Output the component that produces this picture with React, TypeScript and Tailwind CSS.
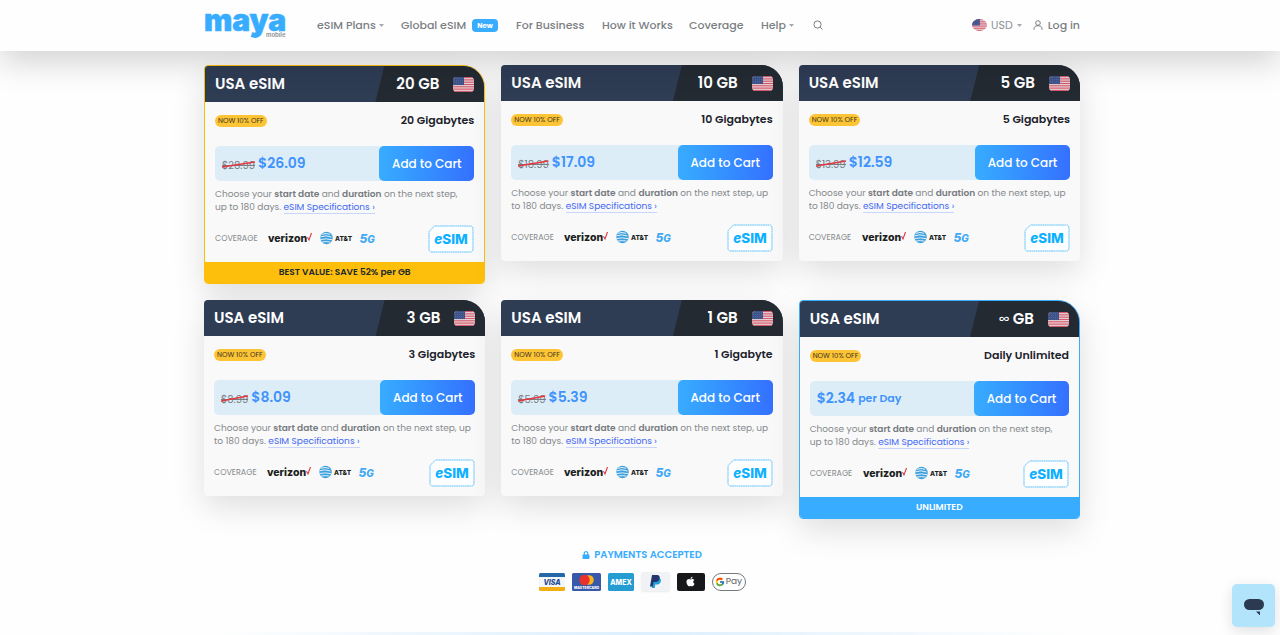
import { useId } from "react";
import type { ReactNode } from "react";
import { FaApple, FaLock } from "react-icons/fa";
import { FcGoogle } from "react-icons/fc";

type Tone = "plain" | "gold" | "blue";

type Plan = {
  amount: string;
  label: string;
  was?: string;
  price: string;
  per?: string;
  tone: Tone;
  ribbon?: string;
};

const plans: Plan[] = [
  { amount: "20", label: "20 Gigabytes", was: "$28.99", price: "$26.09", tone: "gold", ribbon: "BEST VALUE: SAVE 52% per GB" },
  { amount: "10", label: "10 Gigabytes", was: "$18.99", price: "$17.09", tone: "plain" },
  { amount: "5", label: "5 Gigabytes", was: "$13.99", price: "$12.59", tone: "plain" },
  { amount: "3", label: "3 Gigabytes", was: "$8.99", price: "$8.09", tone: "plain" },
  { amount: "1", label: "1 Gigabyte", was: "$5.99", price: "$5.39", tone: "plain" },
  { amount: "∞", label: "Daily Unlimited", price: "$2.34", per: "per Day", tone: "blue", ribbon: "UNLIMITED" },
];

const frame: Record<Tone, string> = {
  plain: "",
  gold: "border border-[#fdbf0c]",
  blue: "border border-[#38acff]",
};

const ribbonTone: Record<Tone, string> = {
  plain: "",
  gold: "bg-[#fdbf0c] text-[#212830]",
  blue: "bg-[#38acff] text-white",
};

function Flag({ className, round = false }: { className: string; round?: boolean }) {
  const id = useId();
  return (
    <svg className={className} viewBox="0 0 21 16" preserveAspectRatio="none" aria-hidden="true">
      <clipPath id={id}>
        {round ? <ellipse cx="10.5" cy="8" rx="10.5" ry="8" /> : <rect width="21" height="16" rx="4" />}
      </clipPath>
      <g clipPath={`url(#${id})`}>
        <rect width="21" height="16" fill="#ead9df" />
        {[0, 1, 2, 3, 4, 5, 6].map((i) => (
          <rect key={i} y={i * 2.46} width="21" height="1.23" fill="#d4596a" />
        ))}
        <rect width="11" height="8.6" fill="#3d5288" />
        {[1.5, 3.5, 5.5, 7.5].map((y) =>
          [1.5, 3.5, 5.5, 7.5, 9.5].map((x) => <circle key={`${x}-${y}`} cx={x} cy={y} r="0.35" fill="#8494bd" />),
        )}
      </g>
    </svg>
  );
}

function Caret() {
  return (
    <svg className="h-[3px] w-[5px]" viewBox="0 0 5 3" aria-hidden="true">
      <path d="M0 0h5L2.500 3z" fill="#a5a9ae" />
    </svg>
  );
}

function Logo() {
  return (
    <svg className="h-[44px] w-[84px]" viewBox="0 0 84 44" role="img" aria-label="maya mobile">
      <text x="0" y="28" fontFamily="Inter, sans-serif" fontSize="30" fontWeight="900" fill="#38acff" stroke="#38acff" strokeWidth="0.600" strokeLinejoin="round">maya</text>
      <text x="62" y="34" fontFamily="Inter, sans-serif" fontSize="6" fontWeight="600" fill="#8a8f95">mobile</text>
    </svg>
  );
}

function NavLink({ children, className }: { children: ReactNode; className: string }) {
  return (
    <a href="#" className={`flex items-center gap-[3px] whitespace-nowrap ${className}`}>
      {children}
    </a>
  );
}

function Header() {
  return (
    <header className="relative z-10 bg-[#fefefe] pb-px pl-[4px] shadow-[0_11px_33px_rgba(0,0,0,0.175)]">
      <div className="mx-auto flex h-[50px] max-w-[876px] items-center text-[11px] font-medium text-[#7b7f84]">
        <a href="#" className="mr-[29px] shrink-0">
          <Logo />
        </a>
        <nav className="flex flex-1 items-center">
          <NavLink className="w-[84px]">eSIM Plans<Caret /></NavLink>
          <NavLink className="w-[115px] gap-[6px]">
            Global eSIM
            <span className="rounded-[4px] bg-[#38acff] px-[5px] text-[7px] leading-[13px] font-bold text-white">New</span>
          </NavLink>
          <NavLink className="w-[86px]">For Business</NavLink>
          <NavLink className="w-[87px]">How it Works</NavLink>
          <NavLink className="w-[72px]">Coverage</NavLink>
          <NavLink className="w-[52px]">Help<Caret /></NavLink>
          <button type="button" aria-label="Search">
            <svg className="size-[10px]" viewBox="0 0 10 10" fill="none" stroke="#7b7f84" aria-hidden="true">
              <circle cx="4.500" cy="4.500" r="3.600" />
              <path d="M7.200 7.200 9.500 9.500" />
            </svg>
          </button>
        </nav>
        <button type="button" className="mr-[11px] flex items-center gap-[4px] font-normal text-[#909398]">
          <Flag className="h-[12px] w-[15px]" round />
          USD
          <Caret />
        </button>
        <a href="#" className="flex items-center gap-[5px]">
          <svg className="size-[10px]" viewBox="0 0 10 10" fill="none" stroke="#7b7f84" aria-hidden="true">
            <circle cx="5" cy="3" r="2.300" />
            <path d="M1 9.700V9c0-2 1.400-3.200 3-3.200h2c1.600 0 3 1.200 3 3.200v.7" />
          </svg>
          Log in
        </a>
      </div>
    </header>
  );
}

function Carriers() {
  return (
    <svg className="h-[16px] w-[110px]" viewBox="0 0 110 16" role="img" aria-label="Verizon, AT&T, 5G">
      <text x="0" y="11" fontFamily="Inter, sans-serif" fontSize="10.500" fontWeight="800" fill="#1c1e21">verizon</text>
      <path d="M39.500 6.200 41 9 43.500 2" fill="none" stroke="#e0383e" strokeWidth="1.100" />
      <circle cx="58.500" cy="7" r="6.200" fill="#3da0dc" />
      <path d="M54 3.300q4-1.600 8 0M52.500 5.800q5.500-2 11 .2M52.500 8.500q6-1.300 11.500.2M54 11q4.500-.8 8.500.1" fill="none" stroke="#e4f2fb" />
      <text x="67" y="9.500" fontFamily="Inter, sans-serif" fontSize="6.500" fontWeight="800" fill="#1c1e21">AT&amp;T</text>
      <text x="91.500" y="12" fontFamily="Inter, sans-serif" fontSize="12" fontWeight="800" fontStyle="italic" fill="#3fa9f5">5<tspan fontSize="10">G</tspan></text>
    </svg>
  );
}

function EsimMark() {
  return (
    <svg className="h-[28px] w-[46px]" viewBox="0 0 46 28" role="img" aria-label="eSIM">
      <path d="M7.500 1H42q3 0 3 3v20q0 3-3 3H4q-3 0-3-3V7.500q0-1 .8-1.800L6 1.600q.6-.6 1.500-.6Z" fill="#fcfeff" stroke="#62c3fb" strokeDasharray="1.800 .4" />
      <text x="23" y="19" textAnchor="middle" fontFamily="Inter, sans-serif" fontSize="13.500" fontWeight="800" fill="#0fb0ff"><tspan fontStyle="italic">e</tspan>SIM</text>
    </svg>
  );
}

function PlanCard({ plan }: { plan: Plan }) {
  return (
    <article className={`overflow-hidden rounded-[4px] rounded-tr-[22px] bg-[#f9f9f9] shadow-[0_11px_33px_rgba(0,0,0,0.13)] ${frame[plan.tone]}`}>
      <div className="flex h-[36px] bg-[#2e3c54] text-white">
        <h2 className="flex flex-1 items-center pt-px pl-[10px] text-[15px] font-semibold">USA eSIM</h2>
        <div className="flex w-[39%] items-center justify-end gap-[14px] bg-[#232a32] pt-px pr-[10px] text-[15px] font-semibold [clip-path:polygon(9px_0,100%_0,100%_100%,0_100%)]">
          <p>
            <span className={plan.amount === "∞" ? "font-normal" : ""}>{plan.amount}</span> GB
          </p>
          <Flag className="h-[15px] w-[21px]" />
        </div>
      </div>
      <div className="px-[10px] pt-[9px] pb-[9px]">
        <div className="flex h-[18px] items-center justify-between">
          <span className="mt-[2px] rounded-full bg-[#fdc436] px-[3px] text-[7px] leading-[12px] text-[#3c3420]">NOW 10% OFF</span>
          <span className="text-[11px] font-semibold text-[#1c222b]">{plan.label}</span>
        </div>
        <div className="mt-[17px] flex h-[35px] rounded-[5px] bg-[#dcedf8]">
          <p className="flex flex-1 items-center gap-[3px] pl-[7px] font-semibold text-[#3f93fb]">
            {plan.was && (
              <s className="relative mt-[3px] text-[10px] font-normal text-[#777d83] no-underline">
                {plan.was}
                <span className="absolute inset-x-0 top-[7px] h-px bg-[#777d83]" />
                <svg className="absolute inset-x-0 top-[3px] h-[7px] w-full" viewBox="0 0 34 7" preserveAspectRatio="none" aria-hidden="true">
                  <path d="M0 6 34 1" stroke="#e5373e" strokeWidth="1.600" />
                </svg>
              </s>
            )}
            <span className="text-[14px]">{plan.price}</span>
            {plan.per && <span className="text-[11px]">{plan.per}</span>}
          </p>
          <button type="button" className="w-[95px] rounded-[5px] bg-linear-to-r from-[#38acff] to-[#3570ff] text-[12px] font-medium text-white">
            Add to Cart
          </button>
        </div>
        <p className="mt-[7px] pr-[3px] text-[9px] leading-[13px] text-[#85898d]">
          Choose your <b className="font-semibold text-[#777b80]">start date</b> and{" "}
          <b className="font-semibold text-[#777b80]">duration</b> on the next step, up to 180 days.{" "}
          <a href="#" className="border-b border-[#c9d6fb] text-[#4068f5]">eSIM Specifications ›</a>
        </p>
        <div className="mt-[11px] flex items-center">
          <span className="w-[53px] text-[8px] leading-[12px] text-[#85898d]">COVERAGE</span>
          <Carriers />
          <span className="ml-auto"><EsimMark /></span>
        </div>
      </div>
      {plan.ribbon && (
        <p className={`text-center text-[9px] leading-[21px] font-semibold ${ribbonTone[plan.tone]}`}>{plan.ribbon}</p>
      )}
    </article>
  );
}

function Payments() {
  return (
    <section className="mt-[29px] flex flex-col items-center">
      <h3 className="flex items-center gap-[4px] text-[10px] leading-[14px] font-semibold text-[#38acff]">
        <FaLock className="size-[8px]" />
        PAYMENTS ACCEPTED
      </h3>
      <div className="mt-[10px] flex items-center gap-[7px]">
        <svg className="h-[18px] w-[26px]" viewBox="0 0 26 18" role="img" aria-label="Visa">
          <rect width="26" height="18" rx="1.500" fill="#f4f5f7" />
          <path d="M0 4V1.500Q0 0 1.500 0h23Q26 0 26 1.500V4z" fill="#2468a8" />
          <path d="M0 14v2.500Q0 18 1.500 18h23q1.500 0 1.500-1.500V14z" fill="#f2ae14" />
          <text x="13" y="11.700" textAnchor="middle" fontFamily="Inter, sans-serif" fontSize="7" fontWeight="800" fontStyle="italic" fill="#1c4b93">VISA</text>
        </svg>
        <svg className="h-[18px] w-[29px]" viewBox="0 0 29 18" role="img" aria-label="Mastercard">
          <rect width="29" height="18" rx="1.500" fill="#3858aa" />
          <circle cx="17" cy="7" r="4.800" fill="#f8b51e" />
          <circle cx="12.500" cy="7" r="5.200" fill="#e9302d" />
          <text x="14.500" y="16.300" textAnchor="middle" fontFamily="Inter, sans-serif" fontSize="3.500" fontWeight="800" fill="#fff">MASTERCARD</text>
        </svg>
        <svg className="h-[18px] w-[26px]" viewBox="0 0 26 18" role="img" aria-label="American Express">
          <rect width="26" height="18" rx="1.500" fill="#259dd2" />
          <text x="13" y="11.500" textAnchor="middle" fontFamily="Inter, sans-serif" fontSize="7" fontWeight="800" fill="#fff">AMEX</text>
        </svg>
        <svg className="h-[19px] w-[29px] rounded-[2px] shadow-[0_1px_2px_rgba(0,0,0,0.08)]" viewBox="0 0 29 19" role="img" aria-label="PayPal">
          <rect width="29" height="19" rx="2" fill="#f1f2f5" />
          <path d="M12.500 6H18q2.500.8 1.800 3.400Q19 12.500 15.500 12.500h-1.200L13.700 16h-3z" fill="#249cd8" />
          <path d="M11 3h5q3.200.3 2.700 3.300-.6 3.500-4.200 3.700h-2l-.8 4.400H9z" fill="#22356f" />
        </svg>
        <span className="flex h-[18px] w-[28px] items-center justify-center rounded-[2px] bg-[#17181a] text-white" role="img" aria-label="Apple Pay">
          <FaApple className="size-[11px]" />
        </span>
        <span className="flex h-[18px] w-[34px] items-center justify-center gap-[1px] rounded-full border border-[#77797c] bg-white text-[9px] text-[#5f6368]">
          <FcGoogle className="size-[10px]" />
          Pay
        </span>
      </div>
    </section>
  );
}

export default function App() {
  return (
    <div className="flex min-h-screen flex-col bg-[#fefefe] font-['Poppins','Inter',sans-serif]">
      <Header />
      <main className="w-full pt-[14px] pl-[4px]">
        <div className="mx-auto max-w-[876px]">
          <div className="grid grid-cols-3 items-start gap-[16px]">
            {plans.map((plan) => (
              <PlanCard key={plan.label} plan={plan} />
            ))}
          </div>
          <Payments />
        </div>
      </main>
      <div className="mx-auto mt-auto h-[3px] w-2/3 bg-linear-to-r from-transparent via-[#dceffd] to-transparent" />
      <button
        type="button"
        aria-label="Open chat"
        className="fixed right-[5px] bottom-[8px] z-20 flex size-[43px] items-center justify-center rounded-[5px] bg-[#b2e4fb] shadow-[0_4px_14px_rgba(0,0,0,0.12)]"
      >
        <svg className="h-[18px] w-[22px]" viewBox="0 0 22 18" fill="#2b3a50" aria-hidden="true">
          <rect x="1" y="2" width="20" height="11" rx="5.500" />
          <path d="M13 14.500h4v4z" />
        </svg>
      </button>
    </div>
  );
}
